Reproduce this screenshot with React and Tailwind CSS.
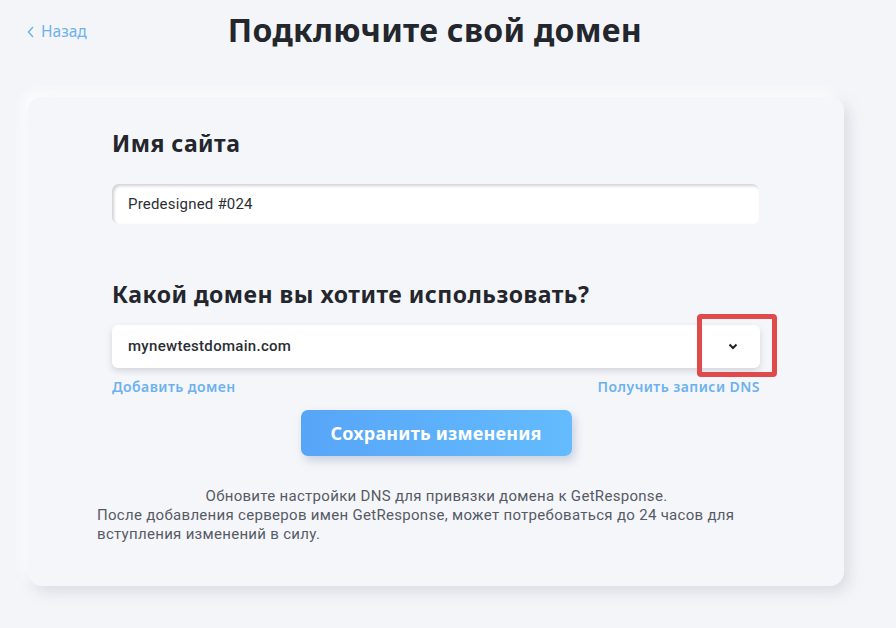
import React from 'react'

const heading = { fontFamily: '"Noto Sans", "Open Sans", sans-serif' }

export default function App() {
  return (
    <div
      className="w-[896px] h-[628px] bg-[#f4f5f9] overflow-hidden text-[#23262d]"
      style={{ fontFamily: 'Roboto, "Noto Sans", sans-serif' }}
    >
      {/* Top bar */}
      <div className="relative h-[62px] flex items-center justify-center">
        <a className="absolute left-[27px] top-[20px] flex items-center gap-[6px] text-[15.5px] text-[#6cb2ee]" style={heading}>
          <svg width="8" height="12" viewBox="0 0 8 12" fill="none" stroke="#6cb2ee" strokeWidth="1.4">
            <path d="M6 1 L1.5 6 L6 11" />
          </svg>
          Назад
        </a>
        <h1 className="text-[32px] font-bold ml-[-26px] mt-[-2px] tracking-[0.3px]" style={heading}>
          Подключите свой домен
        </h1>
      </div>

      {/* Card */}
      <div className="ml-[28px] mt-[35px] w-[816px] h-[489px] rounded-[14px] bg-[#f5f6fa] shadow-[5px_6px_14px_rgba(170,176,190,0.35),-5px_-5px_12px_rgba(255,255,255,0.95)] pl-[84px] pr-[84px] pt-[31px]">
        <h2 className="text-[23px] font-bold leading-[30px] tracking-[0.5px]" style={heading}>Имя сайта</h2>
        <div className="mt-[26px] h-[40px] w-[647px] rounded-[7px] bg-white shadow-[inset_2px_2px_3px_rgba(150,155,165,0.45)] flex items-center pl-[16px] text-[15px] tracking-[0.2px] text-[#2b2e34]">
          Predesigned #024
        </div>

        <h2 className="mt-[55px] text-[23px] font-bold leading-[30px] tracking-[0.5px]" style={heading}>
          Какой домен вы хотите использовать?
        </h2>
        <div className="relative mt-[16px] w-[648px]">
          <div className="h-[43px] rounded-[6px] bg-white shadow-[0_3px_6px_rgba(150,155,170,0.35)] flex items-center justify-between pl-[16px] pr-[22px] text-[15px] font-medium tracking-[0.3px] text-[#2b2e34]">
            <span>mynewtestdomain.com</span>
            <svg width="10" height="7" viewBox="0 0 10 7" fill="none" stroke="#1f2127" strokeWidth="2">
              <path d="M1.5 1.5 L5 5 L8.5 1.5" />
            </svg>
          </div>
          <div className="absolute left-[585px] top-[-11px] w-[80px] h-[63px] rounded-[4px] border-[5px] border-[#e04a4a]" />
        </div>
        <div className="mt-[8px] w-[648px] flex justify-between text-[14px] font-semibold text-[#6cb2ee] tracking-[0.45px]" style={heading}>
          <span>Добавить домен</span>
          <span>Получить записи DNS</span>
        </div>

        <div className="mt-[13px] flex justify-center w-[648px]">
          <button
            className="w-[271px] h-[46px] rounded-[7px] bg-gradient-to-r from-[#57a5f8] to-[#64bbfd] text-white text-[18px] font-bold shadow-[3px_5px_10px_rgba(120,140,170,0.35)] tracking-[0.2px]"
            style={heading}
          >
            Сохранить изменения
          </button>
        </div>

        <div className="mt-[31px] ml-[-15px] w-[679px] text-[15px] leading-[19px] tracking-[0.3px] text-[#555b65]">
          <p className="text-center">Обновите настройки DNS для привязки домена к GetResponse.</p>
          <p>После добавления серверов имен GetResponse, может потребоваться до 24 часов для вступления изменений в силу.</p>
        </div>
      </div>
    </div>
  )
}
